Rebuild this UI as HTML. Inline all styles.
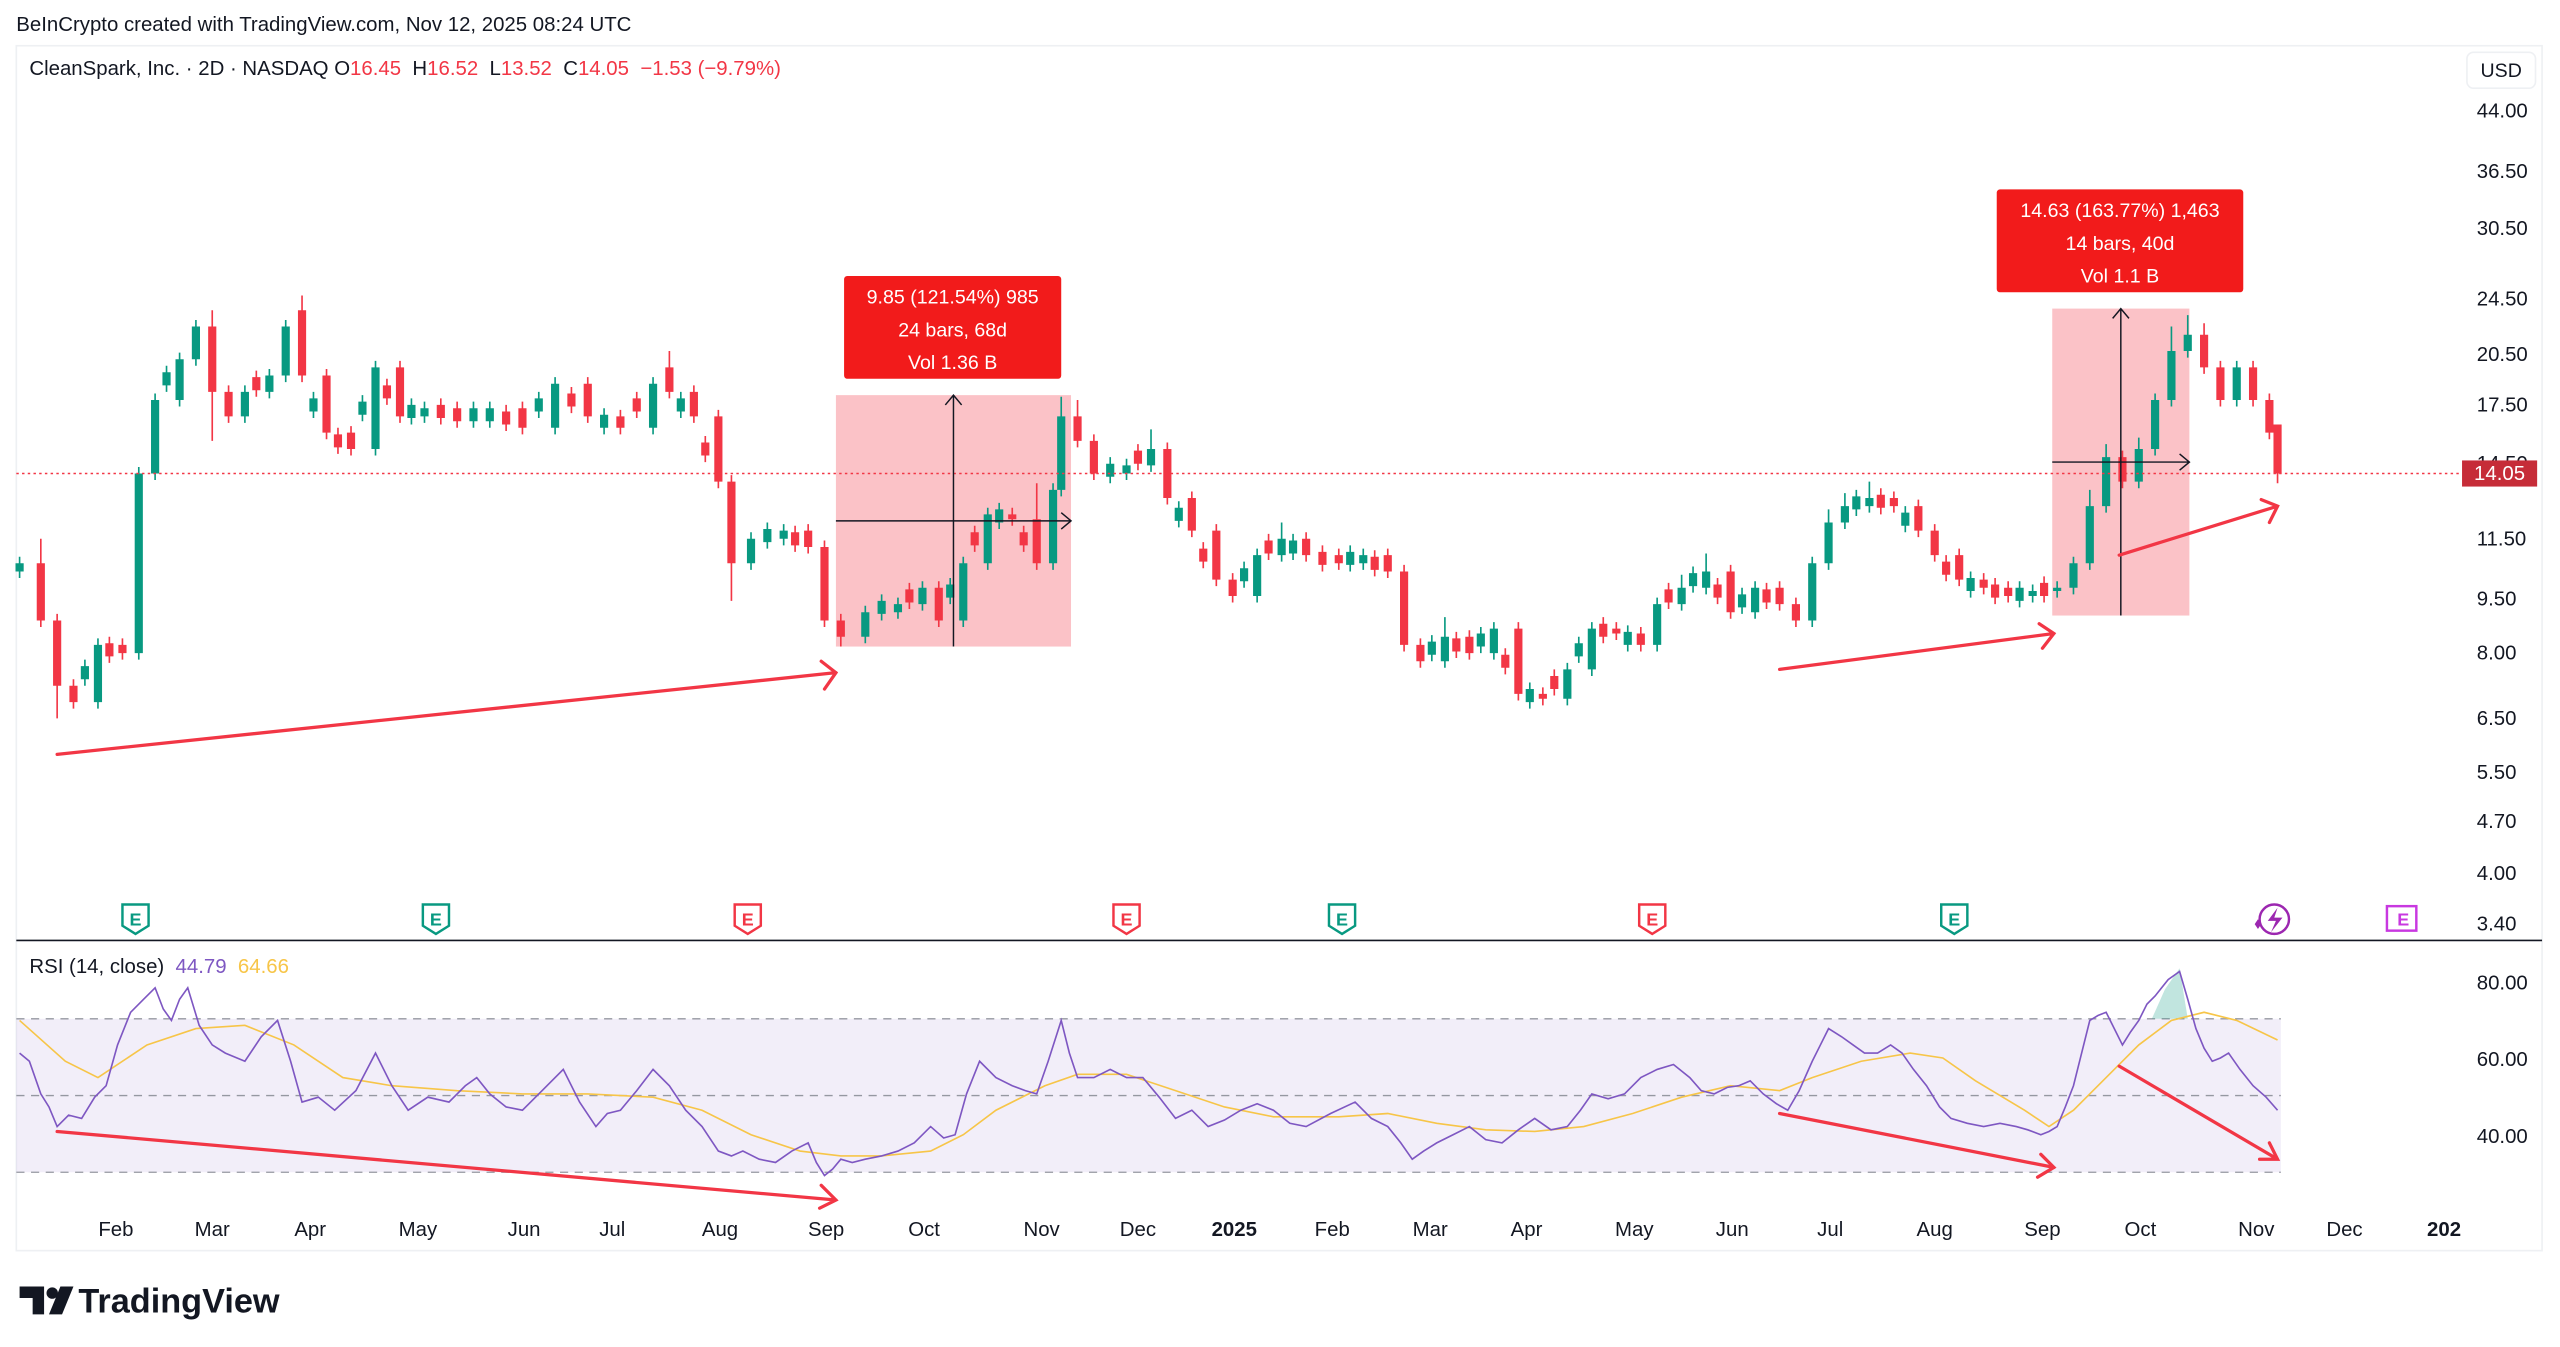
<!DOCTYPE html>
<html><head><meta charset="utf-8"><style>
html,body{margin:0;padding:0;background:#fff;width:2560px;height:1347px;overflow:hidden}
svg{display:block}
text{font-family:"Liberation Sans",sans-serif}
</style></head><body>
<svg width="2560" height="1347" viewBox="0 0 1568 825" xmlns="http://www.w3.org/2000/svg">
<rect width="1568" height="825" fill="#fff"/>
<text x="10" y="19" font-size="12.5" fill="#131722">BeInCrypto created with TradingView.com, Nov 12, 2025 08:24 UTC</text>
<rect x="10" y="28" width="1547" height="738" fill="#fff" stroke="#eef0f3"/>
<text x="18" y="46" font-size="12.5" fill="#131722" xml:space="preserve">CleanSpark, Inc. · 2D · NASDAQ O<tspan fill="#f23645">16.45</tspan>  H<tspan fill="#f23645">16.52</tspan>  L<tspan fill="#f23645">13.52</tspan>  C<tspan fill="#f23645">14.05</tspan>  <tspan fill="#f23645">−1.53 (−9.79%)</tspan></text>
<rect x="1511" y="32" width="42" height="22" rx="4" fill="#fff" stroke="#eef0f3"/>
<text x="1532" y="47" font-size="12" text-anchor="middle" fill="#131722">USD</text>
<g font-size="12.5" fill="#131722">
<text x="1517" y="72">44.00</text><text x="1517" y="109">36.50</text><text x="1517" y="144">30.50</text><text x="1517" y="187">24.50</text><text x="1517" y="221">20.50</text><text x="1517" y="252">17.50</text><text x="1517" y="288">14.50</text><text x="1517" y="334">11.50</text><text x="1517" y="371">9.50</text><text x="1517" y="404">8.00</text><text x="1517" y="444">6.50</text><text x="1517" y="477">5.50</text><text x="1517" y="507">4.70</text><text x="1517" y="539">4.00</text><text x="1517" y="570">3.40</text>
<text x="1517" y="606">80.00</text><text x="1517" y="653">60.00</text><text x="1517" y="700">40.00</text>
</g>
<line x1="10" y1="576" x2="1557" y2="576" stroke="#131722" stroke-width="1"/>
<rect x="10" y="624" width="1387" height="94" fill="#7e57c2" fill-opacity="0.1"/>
<g stroke="#9598a1" stroke-dasharray="5,4" stroke-width="0.8">
<line x1="10" y1="624" x2="1397" y2="624"/><line x1="10" y1="671" x2="1397" y2="671"/><line x1="10" y1="718" x2="1397" y2="718"/></g>
<text x="18" y="596" font-size="12.5" fill="#131722" xml:space="preserve">RSI (14, close)  <tspan fill="#7e57c2">44.79</tspan>  <tspan fill="#f7c548">64.66</tspan></text>

<rect x="512" y="242" width="144" height="154" fill="#f23645" fill-opacity="0.3"/>
<rect x="1257" y="189" width="84" height="188" fill="#f23645" fill-opacity="0.3"/>

<!-- green candles -->
<path stroke="#089981" stroke-width="1" fill="none" d="M12 341V354M60 391V434M85 286V404M95 241V294M110 216V249M120 196V224M150 236V259M165 226V244M175 196V234M230 221V279M260 246V259M300 246V262M340 231V266M400 231V266M460 326V349M480 321V334M530 371V394M550 366V379M565 356V374M590 341V384M605 311V349M645 296V349M650 243V304M690 281V294M705 263V289M770 336V369M785 320V344M835 336V349M885 378V409M915 381V404M960 406V432M975 381V414M1015 366V399M1030 352V374M1045 339V364M1075 356V379M1110 341V384M1120 312V349M1130 302V324M1145 295V314M1245 358V369M1260 356V366M1270 341V364M1280 300V349M1290 272V314M1310 268V299M1320 241V279M1330 200V249M1340 193V219M1370 221V249
M52 404V420M102 224V240M192 240V256M222 242V258M252 244V260M290 246V262M330 240V256M370 250V266M417 240V256M470 320V336M540 364V380M582 354V370M612 308V324M680 280V296M722 307V323M762 344V360M792 327V343M827 334V350M877 389V405M907 384V400M937 418V434M967 390V406M997 383V399M1037 347V363M1067 360V376M1137 300V316M1167 310V326M1207 350V366M1237 356V372"/>
<path fill="#089981" d="M9.5 345h5V350h-5zM57.5 395h5V430h-5zM82.5 290h5V400h-5zM92.5 245h5V290h-5zM107.5 220h5V245h-5zM117.5 200h5V220h-5zM147.5 240h5V255h-5zM162.5 230h5V240h-5zM172.5 200h5V230h-5zM227.5 225h5V275h-5zM257.5 250h5V255h-5zM297.5 250h5V258h-5zM337.5 235h5V262h-5zM397.5 235h5V262h-5zM457.5 330h5V345h-5zM477.5 325h5V330h-5zM527.5 375h5V390h-5zM547.5 370h5V375h-5zM562.5 360h5V370h-5zM587.5 345h5V380h-5zM602.5 315h5V345h-5zM642.5 300h5V345h-5zM647.5 255h5V300h-5zM687.5 285h5V290h-5zM702.5 275h5V285h-5zM767.5 340h5V365h-5zM782.5 330h5V340h-5zM832.5 340h5V345h-5zM882.5 390h5V405h-5zM912.5 385h5V400h-5zM957.5 410h5V428h-5zM972.5 385h5V410h-5zM1012.5 370h5V395h-5zM1027.5 360h5V370h-5zM1042.5 350h5V360h-5zM1072.5 360h5V375h-5zM1107.5 345h5V380h-5zM1117.5 320h5V345h-5zM1127.5 310h5V320h-5zM1142.5 305h5V310h-5zM1242.5 362h5V365h-5zM1257.5 360h5V362h-5zM1267.5 345h5V360h-5zM1277.5 310h5V345h-5zM1287.5 280h5V310h-5zM1307.5 275h5V295h-5zM1317.5 245h5V275h-5zM1327.5 215h5V245h-5zM1337.5 205h5V215h-5zM1367.5 225h5V245h-5z
M49.5 408h5v8h-5zM99.5 228h5v8h-5zM189.5 244h5v8h-5zM219.5 246h5v8h-5zM249.5 248h5v8h-5zM287.5 250h5v8h-5zM327.5 244h5v8h-5zM367.5 254h5v8h-5zM414.5 244h5v8h-5zM467.5 324h5v8h-5zM537.5 368h5v8h-5zM579.5 358h5v8h-5zM609.5 312h5v8h-5zM677.5 284h5v8h-5zM719.5 311h5v8h-5zM759.5 348h5v8h-5zM789.5 331h5v8h-5zM824.5 338h5v8h-5zM874.5 393h5v8h-5zM904.5 388h5v8h-5zM934.5 422h5v8h-5zM964.5 394h5v8h-5zM994.5 387h5v8h-5zM1034.5 351h5v8h-5zM1064.5 364h5v8h-5zM1134.5 304h5v8h-5zM1164.5 314h5v8h-5zM1204.5 354h5v8h-5zM1234.5 360h5v8h-5z"/>
<!-- red candles -->
<path stroke="#f23645" stroke-width="1" fill="none" d="M25 330V384M35 376V440M45 416V434M75 391V404M130 190V270M140 236V259M185 181V234M200 226V269M215 261V279M245 221V259M280 246V262M320 246V266M360 231V259M380 251V266M410 215V244M425 236V259M440 251V299M448 291V368M495 321V339M505 331V384M515 376V396M575 356V384M620 311V322M635 296V349M660 245V274M670 266V294M715 271V309M730 301V329M745 321V359M755 351V369M800 326V344M820 336V349M850 336V354M860 346V399M870 391V409M900 386V404M930 381V429M945 421V432M990 381V392M1005 384V399M1060 346V379M1090 356V374M1100 366V384M1160 301V314M1175 306V329M1185 321V344M1200 336V359M1215 351V364M1230 356V369M1300 276V299M1350 198V229M1360 221V249M1380 221V249M1390 241V269M1395 261V296
M67 390V406M157 227V243M207 262V278M237 232V248M270 244V260M310 248V264M350 237V253M390 240V256M432 267V283M487 322V338M557 357V373M597 322V338M627 322V338M697 272V288M737 332V348M777 327V343M810 334V350M842 337V353M892 387V403M922 397V413M952 410V426M982 378V394M1022 357V373M1052 354V370M1082 357V373M1152 299V315M1192 340V356M1222 354V370M1252 353V369"/>
<path fill="#f23645" d="M22.5 345h5V380h-5zM32.5 380h5V420h-5zM42.5 420h5V430h-5zM72.5 395h5V400h-5zM127.5 200h5V240h-5zM137.5 240h5V255h-5zM182.5 190h5V230h-5zM197.5 230h5V265h-5zM212.5 265h5V275h-5zM242.5 225h5V255h-5zM277.5 250h5V258h-5zM317.5 250h5V262h-5zM357.5 235h5V255h-5zM377.5 255h5V262h-5zM407.5 225h5V240h-5zM422.5 240h5V255h-5zM437.5 255h5V295h-5zM445.5 295h5V345h-5zM492.5 325h5V335h-5zM502.5 335h5V380h-5zM512.5 380h5V390h-5zM572.5 360h5V380h-5zM617.5 315h5V318h-5zM632.5 318h5V345h-5zM657.5 255h5V270h-5zM667.5 270h5V290h-5zM712.5 275h5V305h-5zM727.5 305h5V325h-5zM742.5 325h5V355h-5zM752.5 355h5V365h-5zM797.5 330h5V340h-5zM817.5 340h5V345h-5zM847.5 340h5V350h-5zM857.5 350h5V395h-5zM867.5 395h5V405h-5zM897.5 390h5V400h-5zM927.5 385h5V425h-5zM942.5 425h5V428h-5zM987.5 385h5V388h-5zM1002.5 388h5V395h-5zM1057.5 350h5V375h-5zM1087.5 360h5V370h-5zM1097.5 370h5V380h-5zM1157.5 305h5V310h-5zM1172.5 310h5V325h-5zM1182.5 325h5V340h-5zM1197.5 340h5V355h-5zM1212.5 355h5V360h-5zM1227.5 360h5V365h-5zM1297.5 280h5V295h-5zM1347.5 205h5V225h-5zM1357.5 225h5V245h-5zM1377.5 225h5V245h-5zM1387.5 245h5V265h-5zM1392.5 260h5V290h-5z
M64.5 394h5v8h-5zM154.5 231h5v8h-5zM204.5 266h5v8h-5zM234.5 236h5v8h-5zM267.5 248h5v8h-5zM307.5 252h5v8h-5zM347.5 241h5v8h-5zM387.5 244h5v8h-5zM429.5 271h5v8h-5zM484.5 326h5v8h-5zM554.5 361h5v8h-5zM594.5 326h5v8h-5zM624.5 326h5v8h-5zM694.5 276h5v8h-5zM734.5 336h5v8h-5zM774.5 331h5v8h-5zM807.5 338h5v8h-5zM839.5 341h5v8h-5zM889.5 391h5v8h-5zM919.5 401h5v8h-5zM949.5 414h5v8h-5zM979.5 382h5v8h-5zM1019.5 361h5v8h-5zM1049.5 358h5v8h-5zM1079.5 361h5v8h-5zM1149.5 303h5v8h-5zM1189.5 344h5v8h-5zM1219.5 358h5v8h-5zM1249.5 357h5v8h-5z"/>

<!-- RSI -->
<path d="M1318 624 L1326 606 L1335 593 L1340 624 Z" fill="#089981" fill-opacity="0.25"/>
<polyline fill="none" stroke="#f7c548" stroke-width="1" points="12,625 40,650 60,660 90,640 120,630 150,628 180,640 210,660 240,665 280,668 320,670 360,670 400,672 430,680 460,695 490,705 515,708 540,708 570,705 590,695 610,680 640,665 660,658 690,658 720,668 750,678 780,684 820,684 850,682 880,688 910,692 940,693 970,690 1000,682 1030,672 1060,665 1090,668 1110,660 1140,650 1170,645 1190,648 1210,662 1240,680 1255,690 1270,680 1290,660 1310,640 1330,625 1350,620 1370,625 1395,637"/>
<polyline fill="none" stroke="#7e57c2" stroke-width="1" points="12,645 18,650 25,670 30,678 35,690 42,683 50,685 58,672 65,665 72,640 80,620 88,612 95,605 100,618 105,625 110,612 115,605 122,628 130,640 138,645 150,650 160,635 170,625 178,650 185,675 195,672 205,680 218,668 230,645 240,665 250,680 262,672 275,675 285,665 292,660 300,670 310,678 320,680 332,668 345,655 355,675 365,690 372,682 380,680 390,668 400,655 410,665 420,680 430,690 440,705 448,708 455,705 465,710 475,712 485,705 495,700 500,712 505,720 510,716 515,710 522,712 530,710 540,708 550,705 560,700 570,690 578,697 585,695 592,670 600,650 610,660 620,665 628,668 635,670 642,650 650,625 655,645 660,660 670,660 680,655 690,660 700,660 710,672 720,685 730,680 740,690 750,686 760,680 770,676 780,680 790,688 800,690 815,682 830,675 840,685 850,690 858,700 865,710 872,705 880,700 890,695 900,690 910,698 920,700 930,692 940,685 950,692 960,690 968,680 975,670 985,673 995,670 1005,660 1015,655 1025,652 1035,660 1042,668 1050,670 1058,666 1065,665 1072,662 1080,670 1088,676 1095,680 1102,668 1110,650 1115,640 1120,630 1128,635 1135,640 1142,645 1150,645 1158,640 1165,645 1172,655 1180,665 1188,678 1195,685 1205,688 1215,690 1225,688 1235,690 1242,692 1250,695 1255,693 1260,690 1265,678 1270,665 1275,645 1280,625 1285,622 1290,620 1295,630 1300,640 1305,632 1310,625 1315,615 1320,610 1328,600 1335,595 1340,612 1345,630 1350,642 1355,650 1360,648 1365,645 1372,655 1380,665 1388,672 1395,680"/>

<line x1="10" y1="290" x2="1508" y2="290" stroke="#f23645" stroke-dasharray="1.5,2" stroke-width="0.9"/>
<rect x="1508" y="282" width="46" height="16" fill="#c62c38"/>
<text x="1531" y="294" font-size="12.5" fill="#fff" text-anchor="middle">14.05</text>

<g stroke="#131722" stroke-width="0.9" fill="none">
<path d="M584 396V242M579 248L584 242L589 248M512 319H656M650 314L656 319L650 324"/>
<path d="M1299 377V189M1294 195L1299 189L1304 195M1257 283H1341M1335 278L1341 283L1335 288"/>
</g>
<g stroke="#f23645" stroke-width="2" fill="none" stroke-linecap="round">
<path d="M35 462L512 412M503 405L512 412L505 422"/>
<path d="M1090 410L1258 388M1249 382L1258 388L1251 397"/>
<path d="M1298 340L1395 310M1385 306L1395 310L1390 320"/>
<path d="M35 693L512 735M503 726L512 735L502 740"/>
<path d="M1090 682L1258 715M1250 707L1258 715L1248 721"/>
<path d="M1298 653L1395 710M1390 700L1395 710L1384 710"/>
</g>
<rect x="517" y="169" width="133" height="63" rx="2" fill="#f21b1b"/>
<g font-size="12" fill="#fff" text-anchor="middle"><text x="583.5" y="186">9.85 (121.54%) 985</text><text x="583.5" y="206">24 bars, 68d</text><text x="583.5" y="226">Vol 1.36 B</text></g>
<rect x="1223" y="116" width="151" height="63" rx="2" fill="#f21b1b"/>
<g font-size="12" fill="#fff" text-anchor="middle"><text x="1298.5" y="133">14.63 (163.77%) 1,463</text><text x="1298.5" y="153">14 bars, 40d</text><text x="1298.5" y="173">Vol 1.1 B</text></g>

<g font-size="12.5" fill="#131722" text-anchor="middle">
<text x="71" y="757">Feb</text><text x="130" y="757">Mar</text><text x="190" y="757">Apr</text><text x="256" y="757">May</text><text x="321" y="757">Jun</text><text x="375" y="757">Jul</text><text x="441" y="757">Aug</text><text x="506" y="757">Sep</text><text x="566" y="757">Oct</text><text x="638" y="757">Nov</text><text x="697" y="757">Dec</text><text x="756" y="757" font-weight="bold">2025</text><text x="816" y="757">Feb</text><text x="876" y="757">Mar</text><text x="935" y="757">Apr</text><text x="1001" y="757">May</text><text x="1061" y="757">Jun</text><text x="1121" y="757">Jul</text><text x="1185" y="757">Aug</text><text x="1251" y="757">Sep</text><text x="1311" y="757">Oct</text><text x="1382" y="757">Nov</text><text x="1436" y="757">Dec</text><text x="1497" y="757" font-weight="bold">202</text>
</g>
<g stroke-width="1.5" fill="#fff">
<path d="M75 554h16v13l-8 5l-8-5z" stroke="#089981"/>
<path d="M259 554h16v13l-8 5l-8-5z" stroke="#089981"/>
<path d="M814 554h16v13l-8 5l-8-5z" stroke="#089981"/>
<path d="M1189 554h16v13l-8 5l-8-5z" stroke="#089981"/>
<path d="M450 554h16v13l-8 5l-8-5z" stroke="#f23645"/>
<path d="M682 554h16v13l-8 5l-8-5z" stroke="#f23645"/>
<path d="M1004 554h16v13l-8 5l-8-5z" stroke="#f23645"/>
<rect x="1462" y="555" width="18" height="15" stroke="#c838e0"/>
</g>
<g font-size="11" font-weight="bold" text-anchor="middle">
<text x="83" y="567" fill="#089981">E</text><text x="267" y="567" fill="#089981">E</text><text x="822" y="567" fill="#089981">E</text><text x="1197" y="567" fill="#089981">E</text>
<text x="458" y="567" fill="#f23645">E</text><text x="690" y="567" fill="#f23645">E</text><text x="1012" y="567" fill="#f23645">E</text><text x="1472" y="567" fill="#c838e0">E</text>
</g>
<circle cx="1393" cy="563" r="9" fill="none" stroke="#9c27b0" stroke-width="1.5"/>
<path d="M1395 556 L1389 564 L1394 564 L1391 571 L1398 562 L1393 562 Z" fill="#9c27b0"/>
<path d="M1381 566 l2 -3 l2 3 l-2 3 z" fill="#9c27b0"/>
<g fill="#131722">
<path d="M12 788 h15 v17 h-7 v-10 h-8 z"/>
<circle cx="32" cy="792" r="3.5"/>
<path d="M37 788 h8 l-7 17 h-8 z"/>
<text x="48" y="804" font-size="21" font-weight="bold">TradingView</text>
</g>
</svg>
</body></html>
